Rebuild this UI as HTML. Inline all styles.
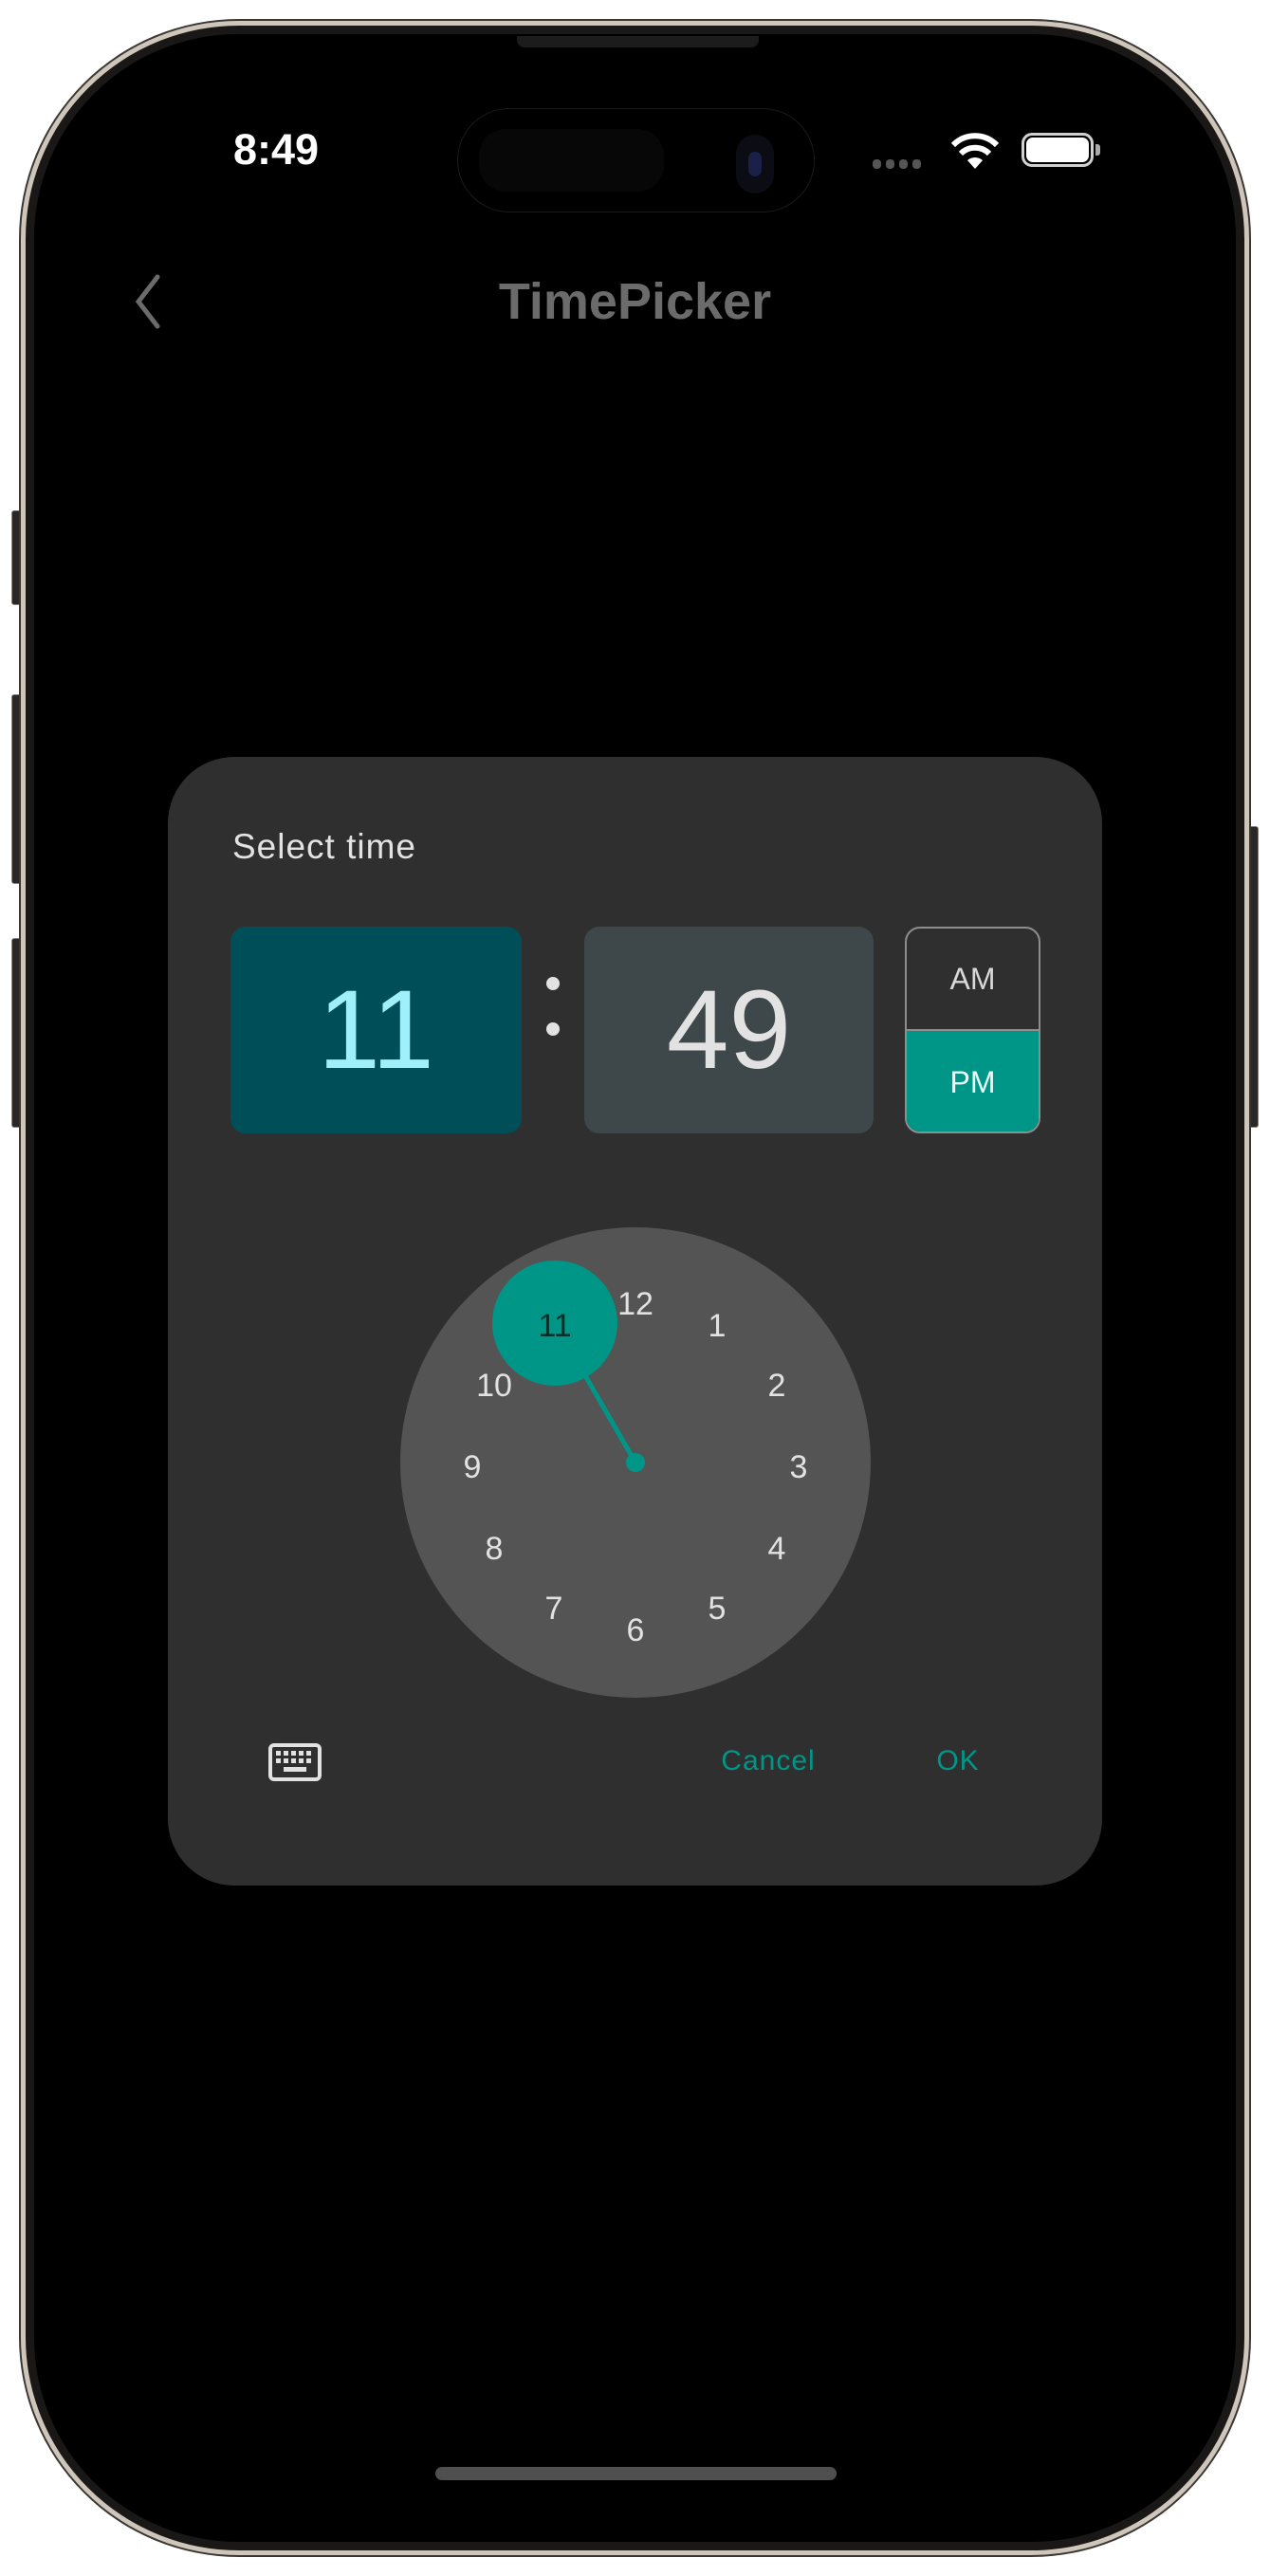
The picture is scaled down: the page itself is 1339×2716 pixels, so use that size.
<!DOCTYPE html>
<html><head><meta charset="utf-8"><style>
*{margin:0;padding:0;box-sizing:border-box}
body{width:1339px;height:2716px;background:#fff;position:relative;overflow:hidden;font-family:"Liberation Sans",sans-serif}
.abs{position:absolute}
.frame{left:22px;top:22px;width:1295px;height:2672px;border-radius:230px;background:#1a1816;border:5px solid #cfc6bb;box-shadow:0 0 0 2px #3a3632}
.screen{left:36px;top:36px;width:1267px;height:2644px;border-radius:215px;background:#000}
.btn{background:#2a2826;border:1px solid #8a8178;border-radius:3px}
</style></head><body>
<div class="abs btn" style="left:12px;top:538px;width:12px;height:100px"></div>
<div class="abs btn" style="left:12px;top:732px;width:12px;height:200px"></div>
<div class="abs btn" style="left:12px;top:989px;width:12px;height:200px"></div>
<div class="abs btn" style="left:1315px;top:871px;width:12px;height:318px"></div>
<div class="abs frame"></div>
<div class="abs screen"></div>
<div class="abs" style="left:545px;top:38px;width:255px;height:12px;background:#1c1c1c;border-radius:0 0 8px 8px"></div>
<!-- island -->
<div class="abs" style="left:482px;top:114px;width:377px;height:110px;border-radius:55px;background:#000;border:1px solid #1a1a1a"></div>
<div class="abs" style="left:505px;top:136px;width:195px;height:66px;border-radius:28px;background:#070707"></div>
<div class="abs" style="left:776px;top:142px;width:40px;height:62px;border-radius:20px;background:#0c0c14"></div>
<div class="abs" style="left:789px;top:160px;width:14px;height:26px;border-radius:7px;background:#1a2048"></div>
<!-- status -->
<div class="abs" style="left:246px;top:132px;font-size:45px;font-weight:bold;color:#fff">8:49</div>
<div class="abs" style="left:920px;top:168px;width:60px;height:10px;display:flex;gap:5px">
<span style="width:9px;height:10px;border-radius:4px;background:#555"></span><span style="width:9px;height:10px;border-radius:4px;background:#555"></span><span style="width:9px;height:10px;border-radius:4px;background:#555"></span><span style="width:9px;height:10px;border-radius:4px;background:#555"></span></div>
<svg class="abs" style="left:1000px;top:138px" width="56" height="42" viewBox="0 0 56 42"><path d="M28 40 L20 31 A12 12 0 0 1 36 31 Z" fill="#fff"/><path d="M13 24 A21 21 0 0 1 43 24" stroke="#fff" stroke-width="6" fill="none"/><path d="M5 15 A32 32 0 0 1 51 15" stroke="#fff" stroke-width="6" fill="none"/></svg>
<div class="abs" style="left:1077px;top:140px;width:76px;height:36px;border:3px solid #d0d0d0;border-radius:11px"></div>
<div class="abs" style="left:1082px;top:145px;width:66px;height:26px;background:#fff;border-radius:7px"></div>
<div class="abs" style="left:1155px;top:152px;width:5px;height:12px;background:#aaa;border-radius:0 3px 3px 0"></div>
<!-- nav -->
<svg class="abs" style="left:136px;top:288px" width="40" height="60"><path d="M30 4 L10 30 L30 56" stroke="#6b6b6b" stroke-width="5" fill="none" stroke-linecap="round"/></svg>
<div class="abs" style="left:0;width:1339px;top:287px;text-align:center;font-size:54px;font-weight:bold;color:#6b6b6b">TimePicker</div>
<!-- dialog -->
<div class="abs" style="left:177px;top:798px;width:985px;height:1190px;border-radius:70px;background:#2f2f2f"></div>
<div class="abs" style="left:245px;top:872px;font-size:37px;color:#e2e2e2;letter-spacing:1px">Select time</div>
<div class="abs" style="left:243px;top:977px;width:307px;height:218px;border-radius:16px;background:#004f58;color:#9ff0fb;font-size:118px;text-align:center;line-height:218px">11</div>
<div class="abs" style="left:576px;top:1030px;width:14px;height:14px;border-radius:7px;background:#e2e2e2"></div>
<div class="abs" style="left:576px;top:1078px;width:14px;height:14px;border-radius:7px;background:#e2e2e2"></div>
<div class="abs" style="left:616px;top:977px;width:305px;height:218px;border-radius:16px;background:#3e4749;color:#e2e2e2;font-size:118px;text-align:center;line-height:218px">49</div>
<div class="abs" style="left:954px;top:977px;width:143px;height:218px;border-radius:16px;border:2px solid #8e8e8e;overflow:hidden">
<div style="height:108px;border-bottom:2px solid #8e8e8e;color:#d8d8d8;font-size:32px;text-align:center;line-height:106px">AM</div>
<div style="height:108px;background:#009687;color:#e8fbf8;font-size:32px;text-align:center;line-height:108px">PM</div></div>
<svg class="abs" style="left:422px;top:1294px" width="496" height="496" viewBox="0 0 496 496" font-family="Liberation Sans, sans-serif" font-size="34" fill="#e2e2e2" text-anchor="middle">
<circle cx="248" cy="248" r="248" fill="#545454"/>
<line x1="248" y1="248" x2="163" y2="101" stroke="#009687" stroke-width="5"/>
<circle cx="248" cy="248" r="10" fill="#009687"/>
<circle cx="163" cy="101" r="66" fill="#009687"/>
<text x="248" y="92">12</text><text x="334" y="115">1</text><text x="397" y="178">2</text><text x="420" y="264">3</text><text x="397" y="350">4</text><text x="334" y="413">5</text><text x="248" y="436">6</text><text x="162" y="413">7</text><text x="99" y="350">8</text><text x="76" y="264">9</text><text x="99" y="178">10</text><text x="163" y="115" fill="#00302b">11</text>
</svg>
<svg class="abs" style="left:283px;top:1838px" width="56" height="40" viewBox="0 0 56 40"><rect x="2" y="2" width="52" height="36" rx="4" fill="none" stroke="#e2e2e2" stroke-width="4"/>
<g fill="#e2e2e2"><rect x="8" y="8" width="5" height="5"/><rect x="16" y="8" width="5" height="5"/><rect x="24" y="8" width="5" height="5"/><rect x="32" y="8" width="5" height="5"/><rect x="40" y="8" width="5" height="5"/><rect x="8" y="16" width="5" height="5"/><rect x="16" y="16" width="5" height="5"/><rect x="24" y="16" width="5" height="5"/><rect x="32" y="16" width="5" height="5"/><rect x="40" y="16" width="5" height="5"/><rect x="16" y="25" width="24" height="5"/></g></svg>
<div class="abs" style="left:710px;width:200px;top:1840px;text-align:center;font-size:30px;color:#009687;letter-spacing:1px">Cancel</div>
<div class="abs" style="left:950px;width:120px;top:1840px;text-align:center;font-size:30px;color:#009687;letter-spacing:1px">OK</div>
<div class="abs" style="left:459px;top:2601px;width:423px;height:14px;border-radius:7px;background:#4f4f4f"></div>
</body></html>
